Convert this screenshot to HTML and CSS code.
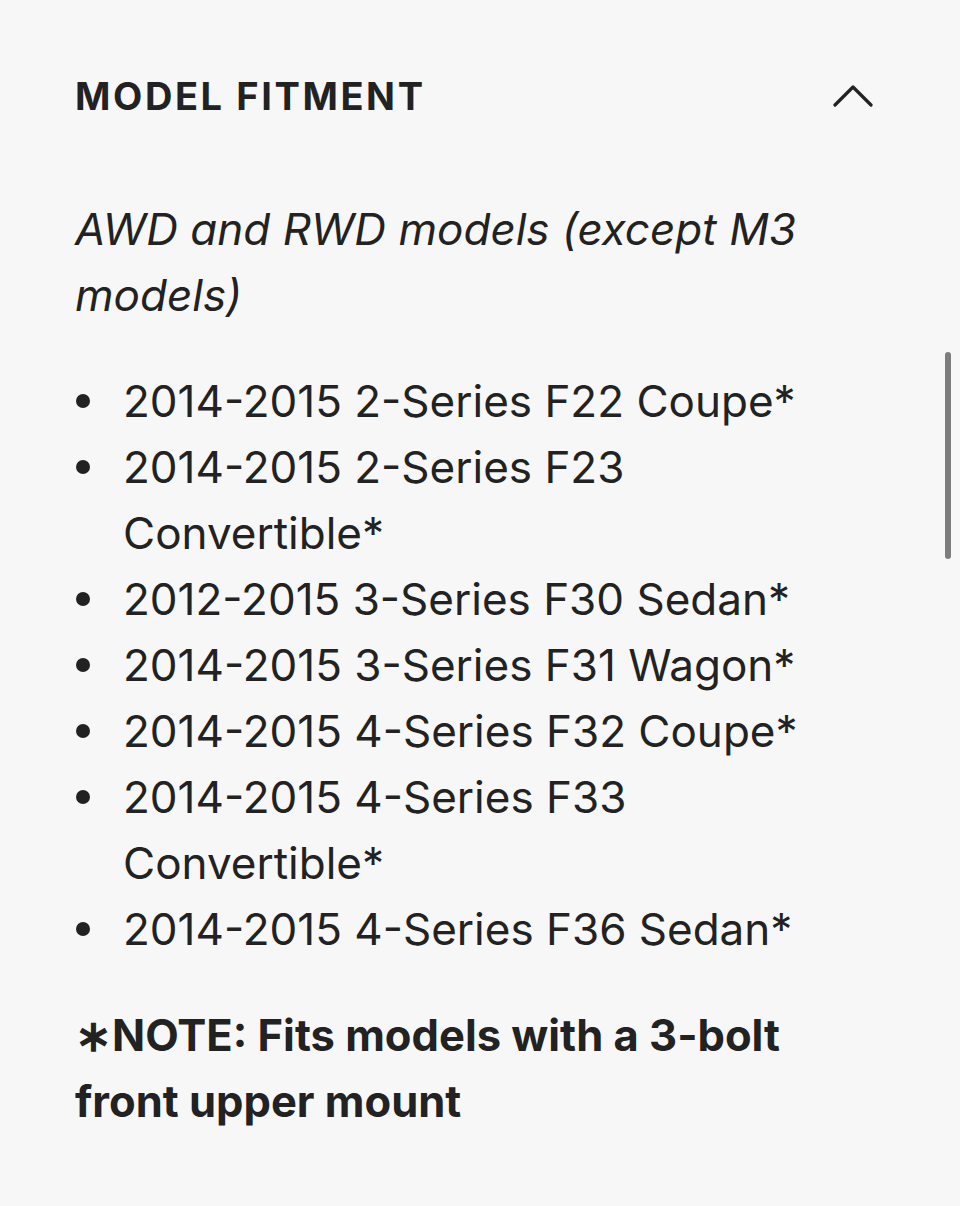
FILE: index.html
```html
<!DOCTYPE html>
<html>
<head>
<meta charset="utf-8">
<link rel="stylesheet" href="styles.css">
</head>
<body>
<section class="panel">
  <header class="panel-head">
    <h2 class="title">MODEL FITMENT</h2>
    <svg class="chevron" width="40" height="24" viewBox="0 0 40 24"><path d="M2 21 L20 3 L38 21" fill="none" stroke="#222" stroke-width="3.2" stroke-linecap="round" stroke-linejoin="round"/></svg>
  </header>
  <p class="intro">AWD and RWD models (except M3 models)</p>
  <ul class="models">
    <li>2014-2015 2-Series F22 Coupe*</li>
    <li>2014-2015 2-Series F23 Convertible*</li>
    <li>2012-2015 3-Series F30 Sedan*</li>
    <li>2014-2015 3-Series F31 Wagon*</li>
    <li>2014-2015 4-Series F32 Coupe*</li>
    <li>2014-2015 4-Series F33 Convertible*</li>
    <li>2014-2015 4-Series F36 Sedan*</li>
  </ul>
  <p class="note">∗NOTE: Fits models with a 3-bolt front upper mount</p>
</section>
<div class="scroll-indicator"></div>
</body>
</html>
```
FILE: styles.css
```css
html, body {
  margin: 0;
  padding: 0;
  background: #f7f7f7;
}
body {
  font-family: Inter, "Noto Sans", sans-serif;
  color: #222;
  width: 960px;
  height: 1206px;
  overflow: hidden;
  position: relative;
}
.panel {
  padding: 72px 0 0 75px;
  width: 760px;
}
.panel-head {
  display: flex;
  justify-content: space-between;
  align-items: center;
  width: 798px;
}
.title {
  margin: 0;
  font-size: 38px;
  font-weight: 700;
  letter-spacing: 2.6px;
  line-height: 48px;
}
.chevron {
  display: block;
}
.intro {
  margin: 76px 0 0;
  font-style: italic;
  font-size: 44px;
  line-height: 66px;
}
.models {
  list-style: none;
  margin: 40px 0 0;
  padding-left: 48px;
  font-size: 44px;
  line-height: 66px;
}
.models li {
  position: relative;
}
.models li::before {
  content: "";
  position: absolute;
  left: -47px;
  top: 26px;
  width: 14px;
  height: 14px;
  border-radius: 50%;
  background: #222;
}
.note {
  margin: 40px 0 0;
  font-size: 43.5px;
  font-weight: 700;
  line-height: 66px;
}
.scroll-indicator {
  position: absolute;
  left: 945px;
  top: 352px;
  width: 6px;
  height: 207px;
  border-radius: 3px;
  background: #7d7d7d;
}
```
